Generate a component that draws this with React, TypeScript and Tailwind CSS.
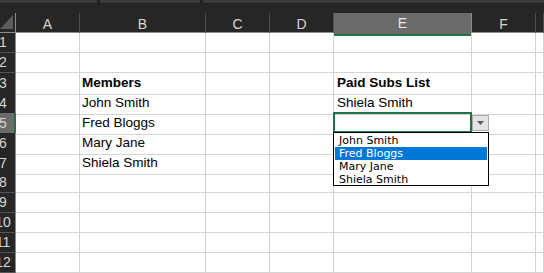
const COLS = ['A', 'B', 'C', 'D', 'E', 'F', '']
const GRID = 'grid grid-cols-[16px_64px_126px_64px_64px_138px_64px_1fr]'

const cells: Record<string, { text: string; bold?: boolean }> = {
  B3: { text: 'Members', bold: true },
  E3: { text: 'Paid Subs List', bold: true },
  B4: { text: 'John Smith' },
  B5: { text: 'Fred Bloggs' },
  B6: { text: 'Mary Jane' },
  B7: { text: 'Shiela Smith' },
  E4: { text: 'Shiela Smith' },
}

const options = ['John Smith', 'Fred Bloggs', 'Mary Jane', 'Shiela Smith']

export default function App() {
  return (
    <div className="w-[544px] h-[273px] overflow-hidden bg-white relative font-['Liberation_Sans',Arial,sans-serif]">
      {/* top strip (formula bar edge) */}
      <div className="h-[4px] bg-[#1f1f1f] flex gap-[3px]">
        <div className="w-[97px] bg-[#3b3b3b] h-[3px]" />
        <div className="w-[100px] bg-[#3b3b3b] h-[3px]" />
        <div className="flex-1 bg-[#3b3b3b] h-[3px]" />
      </div>
      <div className="h-[9px] bg-[#262626]" />

      {/* column headers */}
      <div className={`${GRID} h-[20px] bg-[#262626] border-b border-[#8c8c8c]`}>
        <div className="relative border-r border-[#8c8c8c]">
          <svg width="14" height="15" viewBox="0 0 14 15" className="absolute left-0 top-[2px]">
            <polygon points="13,0 13,14 0,14" fill="#5c5c5c" />
          </svg>
        </div>
        {COLS.map((c) => (
          <div
            key={c || 'g'}
            className={
              c === 'E'
                ? 'bg-[#6b6b6b] border-r border-[#8c8c8c] border-b-2 border-b-[#217346] -mb-px flex items-center justify-center text-[14px] text-[#e8e8e8]'
                : 'border-r border-[#4d4d4d] flex items-center justify-center text-[14px] text-[#d6d6d6]'
            }
          >
            {c}
          </div>
        ))}
      </div>

      {/* rows */}
      {Array.from({ length: 12 }, (_, i) => i + 1).map((r) => (
        <div key={r} className={`${GRID} h-[20px]`}>
          <div
            className={
              r === 5
                ? 'bg-[#6b6b6b] border-r-2 border-[#217346] border-b border-b-[#555] overflow-hidden flex items-center'
                : 'bg-[#262626] border-r border-[#8c8c8c] border-b border-b-[#555] overflow-hidden flex items-center'
            }
          >
            <div className="-ml-[10px] w-[26px] shrink-0 text-center text-[14px] text-[#d6d6d6]">{r}</div>
          </div>
          {COLS.map((c) => {
            const cell = cells[`${c}${r}`]
            return (
              <div
                key={c || 'g'}
                className={`border-r border-b border-[#d4d4d4] flex items-end pb-[1px] overflow-visible whitespace-nowrap text-[13.5px] text-black ${
                  c === 'E' ? 'pl-[3px]' : 'pl-[2px]'
                } ${cell?.bold ? 'font-bold' : ''}`}
              >
                {cell?.text}
              </div>
            )
          })}
        </div>
      ))}

      {/* selected cell E5 */}
      <div className="absolute left-[333px] top-[112px] w-[139px] h-[21px] border-2 border-[#217346]" />

      {/* dropdown button */}
      <div className="absolute left-[472px] top-[115px] w-[17px] h-[16px] bg-[#e3e3e3] border border-[#acacac] flex items-center justify-center">
        <svg width="7" height="4" viewBox="0 0 7 4">
          <polygon points="0,0 7,0 3.5,4" fill="#5a5a5a" />
        </svg>
      </div>

      {/* dropdown list */}
      <div className="absolute left-[333px] top-[132px] w-[156px] h-[54px] bg-white border border-black p-px font-['DejaVu_Sans',sans-serif]">
        {options.map((o, i) => (
          <div
            key={o}
            className={`h-[13px] leading-[13px] pl-[4px] text-[11px] ${
              i === 1 ? 'bg-[#0078d7] text-white' : 'text-black'
            }`}
          >
            {o}
          </div>
        ))}
      </div>
    </div>
  )
}
